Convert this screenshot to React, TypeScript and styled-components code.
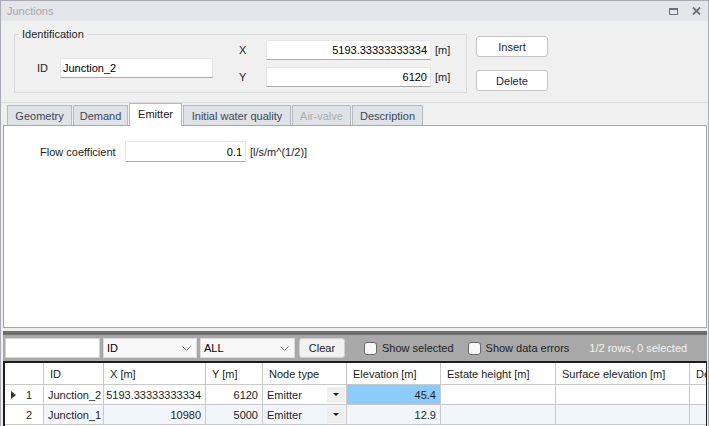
import React from "react";
import styled, { createGlobalStyle } from "styled-components";

const GlobalStyle = createGlobalStyle`
  html, body { margin: 0; padding: 0; background: #ffffff; }
  body {
    font-family: "Liberation Sans", Arial, sans-serif;
    font-size: 11px;
    color: #1e1e1e;
  }
  #root { width: 709px; height: 426px; }
  *, *::before, *::after { box-sizing: border-box; }
`;

const Window = styled.div`
  width: 709px;
  height: 426px;
  display: flex;
  flex-direction: column;
  background: #f0f0f0;
  border: 1px solid #aaabb3;
  border-bottom: none;
  overflow: hidden;
`;

const TitleBar = styled.div`
  flex: none;
  height: 20px;
  display: flex;
  align-items: center;
  padding: 0 7px 0 6px;
  background: #e5e6ea;
  color: #a6a6aa;
`;

const TitleText = styled.span`
  flex: 1;
`;

const TitleButtons = styled.div`
  display: flex;
  align-items: center;
  gap: 14px;
`;

const TopSection = styled.div`
  flex: none;
  height: 81px;
  display: flex;
  align-items: flex-start;
  padding-left: 13px;
`;

const GroupBox = styled.fieldset`
  margin: 7px 0 0 0;
  width: 453px;
  height: 65px;
  padding: 0 0 4px 0;
  border: 1px solid #dadada;
  min-width: 0;
`;

const Legend = styled.legend`
  margin-left: 4px;
  padding: 0 3px;
  line-height: 12px;
  font-size: 11px;
  color: #1e1e1e;
`;

const GroupContent = styled.div`
  display: flex;
  align-items: flex-start;
`;

const IdField = styled.div`
  display: flex;
  align-items: center;
  margin-top: 18px;
  padding-left: 22px;
`;

const FieldLabel = styled.span<{ $w: number }>`
  width: ${(p) => p.$w}px;
  flex: none;
`;

const TextBox = styled.div<{ $w: number; $h?: number; $right?: boolean }>`
  width: ${(p) => p.$w}px;
  height: ${(p) => p.$h ?? 20}px;
  flex: none;
  display: flex;
  align-items: center;
  justify-content: ${(p) => (p.$right ? "flex-end" : "flex-start")};
  padding: ${(p) => (p.$right ? "0 3px 0 0" : "0 0 0 2px")};
  background: #ffffff;
  border: 1px solid #e6e6e6;
  border-bottom-color: #a9a9a9;
  color: #000000;
`;

const XYFields = styled.div`
  display: flex;
  flex-direction: column;
  gap: 7px;
  margin-left: 26px;
`;

const FieldRow = styled.div`
  display: flex;
  align-items: center;
`;

const Unit = styled.span`
  margin-left: 4px;
`;

const ButtonColumn = styled.div`
  display: flex;
  flex-direction: column;
  gap: 13px;
  margin: 15px 0 0 9px;
`;

const PushButton = styled.button`
  width: 72px;
  height: 21px;
  padding: 0;
  border: 1px solid #c6c6c6;
  border-radius: 3px;
  background: #ffffff;
  color: #1c1c4c;
  font-family: inherit;
  font-size: 11px;
`;

const Separator = styled.div`
  flex: none;
  height: 1px;
  background: #dcdcdc;
`;

const TabStrip = styled.div`
  flex: none;
  height: 22px;
  display: flex;
  align-items: flex-end;
  gap: 1px;
  padding-left: 6px;
`;

const Tab = styled.div<{ $w: number; $active?: boolean; $disabled?: boolean }>`
  width: ${(p) => p.$w}px;
  height: ${(p) => (p.$active ? 23 : 20)}px;
  margin-bottom: ${(p) => (p.$active ? -1 : 0)}px;
  position: relative;
  z-index: ${(p) => (p.$active ? 1 : 0)};
  display: flex;
  align-items: center;
  justify-content: center;
  padding-bottom: ${(p) => (p.$active ? 3 : 0)}px;
  background: ${(p) => (p.$active ? "#ffffff" : "#dfe2e7")};
  border: 1px solid #b5b9c1;
  border-bottom: none;
  color: ${(p) => (p.$disabled ? "#acacb2" : p.$active ? "#1a1a1a" : "#3e4256")};
`;

const Panel = styled.div`
  flex: none;
  height: 203px;
  margin: 0 1px 0 2px;
  padding: 15px 0 0 36px;
  background: #ffffff;
  border: 1px solid #a6a6a6;
`;

const BottomArea = styled.div`
  flex: 1;
  min-height: 0;
  display: flex;
  flex-direction: column;
  margin: 3px 1px 0 2px;
`;

const SplitterBar = styled.div`
  flex: none;
  height: 4px;
  background: #6e6e6e;
`;

const Toolbar = styled.div`
  flex: none;
  height: 26px;
  display: flex;
  align-items: center;
  padding-left: 2px;
  background: #a8a8a8;
`;

const SearchBox = styled.div`
  width: 95px;
  height: 20px;
  background: #ffffff;
  border: 1px solid #d4d4d4;
`;

const Combo = styled.div<{ $w: number }>`
  width: ${(p) => p.$w}px;
  height: 20px;
  margin-left: 3px;
  display: flex;
  align-items: center;
  justify-content: space-between;
  padding: 0 5px 0 3px;
  background: #f8f8f8;
  border: 1px solid #dcdcdc;
  color: #000000;
`;

const ClearButton = styled.button`
  width: 46px;
  height: 20px;
  margin-left: 4px;
  padding: 0;
  border: 1px solid #cfcfcf;
  border-radius: 3px;
  background: #f1f1f1;
  color: #1e1e1e;
  font-family: inherit;
  font-size: 11px;
`;

const CheckItem = styled.label<{ $ml: number }>`
  display: flex;
  align-items: center;
  gap: 5px;
  margin-left: ${(p) => p.$ml}px;
  color: #1e1e1e;
`;

const CheckBoxBox = styled.span`
  width: 13px;
  height: 13px;
  border: 1px solid #6a6a6a;
  border-radius: 3px;
  background: #f6f6f6;
`;

const StatusText = styled.span`
  margin-left: 20px;
  color: #f4f4f4;
`;

const Grid = styled.div`
  flex: 1;
  display: grid;
  grid-template-columns: 39px 60px 102px 57px 84px 94px 115px 134px 60px;
  grid-template-rows: 22px 20px 20px;
  align-content: start;
  background: #ffffff;
  border-top: 2px solid #1e1e1e;
  border-left: 2px solid #1e1e1e;
  border-right: 1px solid #1e1e1e;
  overflow: hidden;
`;

const HeadCell = styled.div`
  display: flex;
  align-items: center;
  padding-left: 6px;
  white-space: nowrap;
  overflow: hidden;
  border-right: 1px solid #c9c9c9;
  border-bottom: 1px solid #c9c9c9;
  color: #222222;
`;

const Cell = styled.div<{ $right?: boolean; $bg?: string }>`
  display: flex;
  align-items: center;
  justify-content: ${(p) => (p.$right ? "flex-end" : "flex-start")};
  padding: ${(p) => (p.$right ? "0 4px 0 0" : "0 0 0 4px")};
  white-space: nowrap;
  overflow: hidden;
  background: ${(p) => p.$bg ?? "#ffffff"};
  border-right: 1px solid #c9c9c9;
  border-bottom: 1px solid #c9c9c9;
  color: #1e1e1e;
`;

const RowHeadCell = styled.div`
  display: flex;
  align-items: center;
  padding-left: 6px;
  background: #ffffff;
  border-right: 1px solid #c9c9c9;
  border-bottom: 1px solid #c9c9c9;
`;

const RowMarker = styled.span`
  width: 10px;
  display: flex;
  align-items: center;
`;

const RowNumber = styled.span`
  margin-left: 5px;
`;

const NodeTypeCell = styled(Cell)`
  justify-content: space-between;
  padding-right: 1px;
`;

const DropButton = styled.span`
  width: 18px;
  height: 16px;
  display: flex;
  align-items: center;
  justify-content: center;
  background: #efefef;
`;

const Chevron = () => (
  <svg width="9" height="5" viewBox="0 0 9 5">
    <path d="M0.5 0.5 L4.5 4.5 L8.5 0.5" fill="none" stroke="#707070" strokeWidth="1" />
  </svg>
);

const SmallArrow = () => (
  <svg width="6" height="3" viewBox="0 0 6 3">
    <path d="M0 0 H6 L3 3 Z" fill="#111111" />
  </svg>
);

type Row = {
  n: number;
  id: string;
  x: string;
  y: string;
  elev: string;
  current?: boolean;
  alt?: boolean;
};

const rows: Row[] = [
  { n: 1, id: "Junction_2", x: "5193.33333333334", y: "6120", elev: "45.4", current: true },
  { n: 2, id: "Junction_1", x: "10980", y: "5000", elev: "12.9", alt: true },
];

const headers = [
  "",
  "ID",
  "X [m]",
  "Y [m]",
  "Node type",
  "Elevation [m]",
  "Estate height [m]",
  "Surface elevation [m]",
  "Demand [l/s]",
];

const tabs = [
  { label: "Geometry", w: 65 },
  { label: "Demand", w: 55 },
  { label: "Emitter", w: 53, active: true },
  { label: "Initial water quality", w: 108 },
  { label: "Air-valve", w: 59, disabled: true },
  { label: "Description", w: 71 },
];

export default function App() {
  return (
    <>
      <GlobalStyle />
      <Window>
        <TitleBar>
          <TitleText>Junctions</TitleText>
          <TitleButtons>
            <svg width="9" height="7" viewBox="0 0 9 7">
              <rect x="0.5" y="0.5" width="8" height="6" fill="none" stroke="#6d6e7e" strokeWidth="1" />
              <rect x="0" y="0" width="9" height="2" fill="#6d6e7e" />
            </svg>
            <svg width="9" height="8" viewBox="0 0 9 8">
              <path d="M1 0.5 L8 7.5 M8 0.5 L1 7.5" stroke="#6d6e7e" strokeWidth="1.8" />
            </svg>
          </TitleButtons>
        </TitleBar>

        <TopSection>
          <GroupBox>
            <Legend>Identification</Legend>
            <GroupContent>
              <IdField>
                <FieldLabel $w={23}>ID</FieldLabel>
                <TextBox $w={153}>Junction_2</TextBox>
              </IdField>
              <XYFields>
                <FieldRow>
                  <FieldLabel $w={27}>X</FieldLabel>
                  <TextBox $w={165} $right>5193.33333333334</TextBox>
                  <Unit>[m]</Unit>
                </FieldRow>
                <FieldRow>
                  <FieldLabel $w={27}>Y</FieldLabel>
                  <TextBox $w={165} $right>6120</TextBox>
                  <Unit>[m]</Unit>
                </FieldRow>
              </XYFields>
            </GroupContent>
          </GroupBox>
          <ButtonColumn>
            <PushButton>Insert</PushButton>
            <PushButton>Delete</PushButton>
          </ButtonColumn>
        </TopSection>

        <Separator />

        <TabStrip>
          {tabs.map((t) => (
            <Tab key={t.label} $w={t.w} $active={t.active} $disabled={t.disabled}>
              {t.label}
            </Tab>
          ))}
        </TabStrip>

        <Panel>
          <FieldRow>
            <FieldLabel $w={85}>Flow coefficient</FieldLabel>
            <TextBox $w={121} $h={21} $right>0.1</TextBox>
            <Unit>[l/s/m^(1/2)]</Unit>
          </FieldRow>
        </Panel>

        <BottomArea>
          <SplitterBar />
          <Toolbar>
            <SearchBox />
            <Combo $w={94}>
              <span>ID</span>
              <Chevron />
            </Combo>
            <Combo $w={95}>
              <span>ALL</span>
              <Chevron />
            </Combo>
            <ClearButton>Clear</ClearButton>
            <CheckItem $ml={19}>
              <CheckBoxBox />
              Show selected
            </CheckItem>
            <CheckItem $ml={14}>
              <CheckBoxBox />
              Show data errors
            </CheckItem>
            <StatusText>1/2 rows, 0 selected</StatusText>
          </Toolbar>
          <Grid>
            {headers.map((h, i) => (
              <HeadCell key={i}>{h}</HeadCell>
            ))}
            {rows.map((r) => {
              const bg = r.alt ? "#f2f5fb" : "#ffffff";
              return (
                <React.Fragment key={r.n}>
                  <RowHeadCell>
                    <RowMarker>
                      {r.current && (
                        <svg width="5" height="8" viewBox="0 0 5 8">
                          <path d="M0 0 L5 4 L0 8 Z" fill="#333333" />
                        </svg>
                      )}
                    </RowMarker>
                    <RowNumber>{r.n}</RowNumber>
                  </RowHeadCell>
                  <Cell $bg={bg}>{r.id}</Cell>
                  <Cell $bg={bg} $right>{r.x}</Cell>
                  <Cell $bg={bg} $right>{r.y}</Cell>
                  <NodeTypeCell $bg={bg}>
                    <span>Emitter</span>
                    <DropButton>
                      <SmallArrow />
                    </DropButton>
                  </NodeTypeCell>
                  <Cell $bg={r.current ? "#8dcbfa" : bg} $right>{r.elev}</Cell>
                  <Cell $bg={bg} />
                  <Cell $bg={bg} />
                  <Cell $bg={bg} />
                </React.Fragment>
              );
            })}
          </Grid>
        </BottomArea>
      </Window>
    </>
  );
}
